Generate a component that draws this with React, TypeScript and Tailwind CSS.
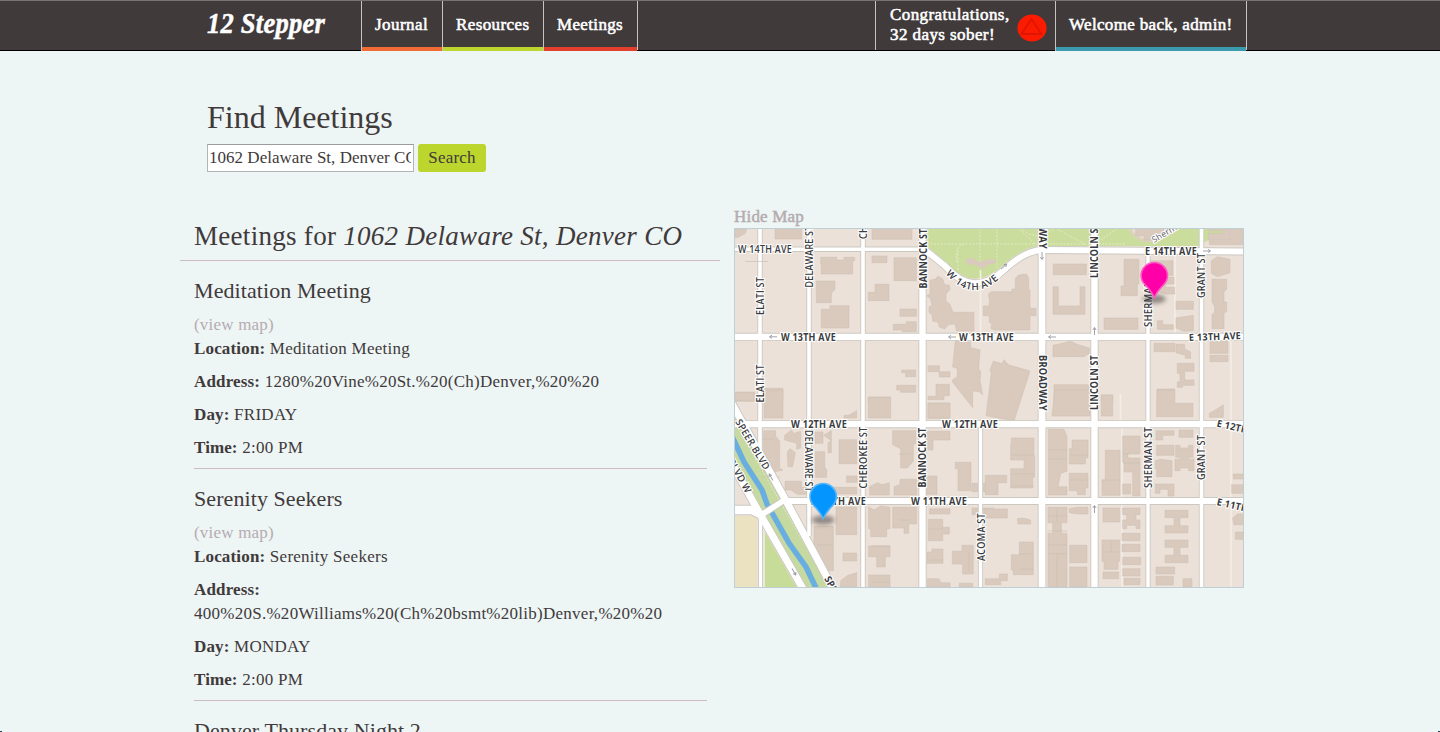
import React from "react";

type Meeting = { name: string; address: string; day: string; time: string };

const meetings: Meeting[] = [
  { name: "Meditation Meeting", address: "1280%20Vine%20St.%20(Ch)Denver,%20%20", day: "FRIDAY", time: "2:00 PM" },
  { name: "Serenity Seekers", address: "400%20S.%20Williams%20(Ch%20bsmt%20lib)Denver,%20%20", day: "MONDAY", time: "2:00 PM" },
];
const nextMeeting = "Denver Thursday Night 2";

// path of each road and the width of its surface
const roads: [string, number][] = [
  ["M760 228V450", 3],
  ["M760.5 516V587", 2.6],
  ["M809 228V536", 3],
  ["M863 228V587", 3],
  ["M980.5 424V587", 2.8],
  ["M1148 246V587", 2.8],
  ["M1201.5 228V587", 3],
  ["M734 249.3H923", 3],
  ["M922.5 228V587", 5.8],
  ["M1042 228V587", 6.2],
  ["M1094.5 228V587", 5.8],
  ["M734 336.8H1244", 5.6],
  ["M734 424.2H1244", 5.6],
  ["M784 501H1244", 5.6],
  ["M924 249L945 266Q974 299 1005 269Q1026 250 1043 250L1110 250.5L1244 251.5", 5.4],
  ["M732 510H752L764 516", 8],
  ["M731 402L784 497L836 594", 6.4],
  ["M731 462L760 514L806 594", 6.4],
  ["M763 514L786 499", 5],
];

type Label = { t: string; x: number; y: number; w: number; r?: number; s?: number };
const labels: Label[] = [
  { t: "W 14TH AVE", x: 738, y: 249.5, w: 54 },
  { t: "DELAWARE ST", x: 809.5, y: 287.5, w: 62, r: -90 },
  { t: "CHEROKEE ST", x: 863.5, y: 239, w: 61, r: -90 },
  { t: "BANNOCK ST", x: 923, y: 288.5, w: 60, r: -90, s: 1 },
  { t: "ELATI ST", x: 760, y: 315, w: 38, r: -90 },
  { t: "ELATI ST", x: 760, y: 402.5, w: 38, r: -90 },
  { t: "W 13TH AVE", x: 781, y: 337, w: 55, s: 1 },
  { t: "W 13TH AVE", x: 959, y: 337.5, w: 55, s: 1 },
  { t: "E 13TH AVE", x: 1189, y: 337.5, w: 52, r: -2, s: 1 },
  { t: "E 14TH AVE", x: 1145, y: 251.3, w: 52, s: 1 },
  { t: "BROADWAY", x: 1042, y: 193, w: 56, r: 90, s: 1 },
  { t: "BROADWAY", x: 1042, y: 355, w: 56, r: 90, s: 1 },
  { t: "LINCOLN ST", x: 1094.5, y: 278, w: 55, r: -90, s: 1 },
  { t: "LINCOLN ST", x: 1094.5, y: 410, w: 55, r: -90, s: 1 },
  { t: "SHERMAN ST", x: 1148.5, y: 327, w: 61, r: -90 },
  { t: "SHERMAN ST", x: 1148.5, y: 488, w: 61, r: -90 },
  { t: "GRANT ST", x: 1201.5, y: 298, w: 45, r: -90 },
  { t: "GRANT ST", x: 1201.5, y: 480, w: 45, r: -90 },
  { t: "W 12TH AVE", x: 791, y: 424.3, w: 56, s: 1 },
  { t: "W 12TH AVE", x: 942, y: 424.3, w: 56, s: 1 },
  { t: "W 11TH AVE", x: 810, y: 501, w: 56, s: 1 },
  { t: "W 11TH AVE", x: 911, y: 501, w: 56, s: 1 },
  { t: "CHEROKEE ST", x: 863.5, y: 488.5, w: 62, r: -90 },
  { t: "BANNOCK ST", x: 922.5, y: 487.5, w: 60, r: -90, s: 1 },
  { t: "DELAWARE ST", x: 808.5, y: 430, w: 62, r: 90 },
  { t: "ACOMA ST", x: 981, y: 561, w: 48, r: -90 },
  { t: "E 12TH AVE", x: 1217, y: 423, w: 53, r: 13, s: 1 },
  { t: "E 11TH AVE", x: 1217, y: 501.5, w: 53, r: 13, s: 1 },
  { t: "SPEER BLVD", x: 738, y: 420, w: 57, r: 59 },
  { t: "SPEER BLVD W", x: 715, y: 431, w: 70, r: 61 },
  { t: "SPEER BLVD", x: 827, y: 577, w: 56, r: 60, s: 1 },
];

const northWest =
  "M3 88H38L34 100L14 112H3ZM123 85H203V117H123ZM260 172H308V180H330V172H362V182H356V222H262V190H260ZM414 85H534V118H414ZM414 168H459V188H414ZM480 173H547V242H480ZM247 243H303V268L292 280V308H247ZM423 253H465V302H403V277H423ZM262 328H288V317H345V384H262ZM498 327H547V349H498ZM478 373H517V365H547V395H505V390H478ZM503 510H545V530H515V518H503ZM488 556H545V577H500V570H488ZM403 591H469V604H403ZM5 576H62V604H5ZM93 565H147V604H93Z";
const civic =
  "M60 166L76 162L84 153L98 162L104 180H117L120 194L108 207V228L120 238L128 260L134 262H192V318H140L134 296L115 300L104 312L88 306L84 292L68 288L66 270L57 262V246L66 240L62 222L50 212L60 206ZM316 160Q324 146 350 148L356 160V192L360 196V250H378V272H360V315H250V312L242 310L246 298L238 292V272H220V243H238V222Q230 204 246 200H306V192H316ZM136 346L182 352V368L210 374L206 432L212 440L210 465L218 510L208 500L188 498V548L128 472V464L142 455V430L128 426ZM250 408L276 416L282 404L296 420L360 438L312 588L228 572L244 444L240 436ZM54 422H88V440H120V456H88V440H54ZM78 478H118V512H102V524H54V514H78ZM54 534H119V580H54Z";
const northEast =
  "M208 192H307V224H208ZM207 260H223V318H288V260H303V343H207ZM207 436L242 428Q262 420 276 432L316 444V460L300 470H207ZM210 554H316V604H210ZM420 178H465V252H460V287H411V258H420ZM360 354H462V388H360ZM498 182H567V226H524V232H570V252H545V262H572V282H545L510 270ZM576 304H628V328H576ZM520 362H536V374H568V388H520ZM576 354L628 346V392L600 394L576 384ZM682 182L700 170L738 178V218L700 230L682 220ZM684 238H728V268L720 275V306H728V334L720 340V386H684V344L692 336V320L684 306ZM510 430H573V455H510ZM576 433H602V447L620 456V475H604V466L576 458ZM580 490H630V514H602V540H630V556H596V562H580V546H588V520H580ZM678 424H732V460H678ZM678 466H732V485H678ZM519 567H572V604H519ZM673 85H738V120H673V100H718V92H673ZM676 122H738V134H676ZM740 85H778V134H740ZM352 585H386V604H352ZM455 85H539V110H515V120H480V108H455Z";
const southWest =
  "M4 8H60V32H4ZM90 0H147V84H90ZM89 122H125V138L137 154V235L147 240L120 246H89ZM152 136L172 120L180 130L200 124V174L188 178V160L152 150ZM160 186L168 176L184 188L176 230H162ZM243 126H267V160H243ZM269 136L292 122V152ZM315 149H368V221H315ZM282 158L292 152V188H282ZM244 185H272V234L278 238V262H244ZM330 76H344L368 62V84H330ZM403 22H470V84H403ZM153 274H202V292H225V313H190L170 300H153ZM276 292H368V312H276ZM338 258H370V277H338ZM407 290L430 278L445 284L466 278V315H407ZM476 122H545V162H538V214L520 234H500V176L476 164ZM480 290L498 284V268H548V315H480ZM582 40H648V84H582ZM580 124H648V150H597V180H580ZM664 217H711V302H672V236H664ZM582 258H609V313H555V276ZM714 280H779V305H714ZM306 351H368V434H306ZM404 350L420 360L440 348L468 352V416H458V440H410V416H404ZM476 352H548V402H524V430H510V414H476ZM586 356H648V372H586ZM583 388H626V412H646V432H626V452H583ZM594 477H627V520H579V486H594ZM327 489H368V513H327ZM404 468H468V500H454V531H428V500H404ZM655 484H684V466H718V552H686V522H655ZM404 555H468V591H404ZM240 408H298V542H275V554L296 570V591L240 500ZM320 572L342 556L368 548V591H320ZM580 566H614L622 578H648V591H580ZM676 580H716V591H676ZM714 354H779V374H714Z";
const southEast =
  "M212 0H318V78H204ZM352 15H386V78H352ZM520 0H572V40H627V80H518V40ZM676 70L704 54L718 44V82H676ZM82 144H150V198H152V262H146V294H80V236H120V210H80V162H82ZM4 256H68V278H42V314H4ZM193 118H240L249 140V244L230 250L222 290H249V315H193ZM264 150H312V204H304V222H256V176H264ZM256 250H312V294H304V314H280V302H256ZM364 181H408V316H354V270H364ZM416 138H468V190H432V204H468V318H446V246H420V216H416ZM416 282H440V312H416ZM516 122H570V136H536V150H516ZM585 120H627V142H585ZM518 166H570V196H518ZM575 166H588V174H614V166H627V202H614V208H630V242H614V234H588V242H573V208H588V202H575ZM514 212L530 208L564 212V260H518V236H514ZM514 282H570V318H552V298H528V310H514ZM748 252H778V267H748ZM743 284H778V310H743ZM4 357H70V384H4ZM100 386L118 384L140 390V402H102ZM106 456H148V554H88V540H82V494H106ZM4 566H46V552H70V572H50V584H4ZM192 352H249V398H232V430H249V491H192V430H206V398H192ZM256 356L278 352H312V372H280L256 368ZM192 491H249V591H192ZM257 466H309V518H257ZM257 531H309V591H257ZM357 354H407V396H357ZM354 450H407V514H402V538H360V514H354ZM357 546H404V566H357ZM416 354H468V374H456V390H468V416H456V406H428V416H416V390H428V374H416ZM414 430H468V452H414ZM414 463H468V485H414ZM416 502H470V524H416ZM416 536H468V558H416ZM420 565H468V584H420ZM543 361H612V383H588V407H612V429H543V407H570V383H543ZM543 450H612V472H588V496H612V518H543V496H570V472H543ZM516 531H572V552H516ZM516 559H568V585H516ZM597 566H624V591H597ZM746 384L760 372H778V404H750ZM754 426H778V448H754Z";

const buildingGroups: [string, string][] = [
  ["translate(734 200) scale(.33333)", northWest],
  ["translate(910 225) scale(.33333)", civic],
  ["translate(984 200) scale(.33333)", northEast],
  ["translate(734 390) scale(.33333)", southWest],
  ["translate(984 390) scale(.33333)", southEast],
];

function Arrow({ x, y, r }: { x: number; y: number; r: number }) {
  return (
    <path d="M-4 0H3M1 -1.6L3.600 0L1 1.600" transform={`translate(${x} ${y}) rotate(${r})`} fill="none" stroke="#9899a1" strokeWidth="0.9" />
  );
}

function Pin({ x, y, fill, edge }: { x: number; y: number; fill: string; edge: string }) {
  return (
    <g transform={`translate(${x} ${y})`}>
      <ellipse cx="0" cy="0" rx="11.500" ry="4.500" fill="#3b3330" opacity="0.5" filter="url(#soft)" />
      <path
        d="M0 -1.2C-2 -6 -5 -10 -9.5 -14.5C-12 -17.200 -13.200 -20 -13.200 -23.500A13.200 13 0 0 1 13.200 -23.500C13.200 -20 12 -17.200 9.500 -14.500C5 -10 2 -6 0 -1.200Z"
        fill={fill}
        stroke={edge}
        strokeWidth="1.6"
      />
    </g>
  );
}

function StreetMap() {
  return (
    <svg viewBox="734 228 510 360" className="block h-[360px] w-[510px]" fontFamily="'Open Sans', 'Noto Sans', sans-serif">
      <defs>
        <filter id="soft" x="-50%" y="-100%" width="200%" height="300%">
          <feGaussianBlur stdDeviation="2.2" />
        </filter>
        <path id="bend" d="M945.500 273.500Q972 305 1001 277" />
      </defs>
      <rect x="734" y="228" width="510" height="360" fill="#ebe1d8" />
      <path d="M734 516H757V588H734Z" fill="#eae2c0" />
      <path d="M762 527L797 588H764Z" fill="#c7dc99" />
      <path d="M734 412L784 503L832 588H802L760 510L734 468Z" fill="#c5d9a0" />
      <path d="M927 228H1231L1198 246H1040Q1026 246 1004 264Q975 293 949 265L927 246Z" fill="#cadd9c" />
      <path d="M1129 228Q1135 239 1147 241Q1165 239 1178 228Z" fill="#ebe1d8" stroke="#ddd2bd" strokeWidth="3" />
      <path
        d="M927 244H1125M997 228V268M980 228V262M958 270V248M1018 228L1035 244M1020 228Q1036 243 1055 228M1095 244L1118 228M1055 228L1085 244M957 262Q954 245 964 244M738 428L829 587M779 540L802 587"
        fill="none"
        stroke="#e4ecc9"
        strokeWidth="0.9"
        strokeDasharray="2 1.5"
      />
      <path d="M965 259L972 258L980 262L989 259L997 260L996 263L987 265L984 269L979 267L975 265L967 264Z" fill="#d9cabd" />
      <path d="M731 434L744 462L762 490L767 504L789 543L806 567L817 590" fill="none" stroke="#69aee0" strokeWidth="5.500" />
      <path d="M1175 255V336M1231 338V424M1231 428V588M1120.500 394V424M1122 428V588M764 512V588M980.500 270V334" fill="none" stroke="#f4eee8" strokeWidth="1.600" />
      <g fill="#d9cabd" stroke="#cdbfb2" strokeWidth="1.600">
        {buildingGroups.map(([transform, d]) => (
          <path key={transform} transform={transform} d={d} />
        ))}
      </g>
      <path
        d="M761 477H780M761 439H774M899 454H911M817 545H833M899 520H910M929 529H943M929 560H942M1011 455H1034M1011 474H1034M1011 486H1034M1048 450H1067M1048 459H1067M1048 516H1067M1048 531H1067M1048 545H1067M1057 508V523M1057 554V587M1070 455H1088M1070 480H1088M1102 480H1120M1123 454H1140M1123 463H1140M1111 540V552M1102 552H1119M1019 554H1033M1019 569H1033M969 552V572M872 546H890M872 582H890"
        fill="none"
        stroke="#cbbcae"
        strokeWidth="0.6"
      />
      <g fill="none" stroke="#cbc8c1">
        {roads.map(([d, w]) => (
          <path key={d} d={d} strokeWidth={w + 2.4} />
        ))}
      </g>
      <g fill="none" stroke="#ffffff">
        {roads.map(([d, w]) => (
          <path key={d} d={d} strokeWidth={w + 0.6} />
        ))}
      </g>
      <path d="M745 261.500H768" stroke="#c9c1ba" strokeWidth="0.7" />
      <Arrow x={773} y={336.8} r={180} />
      <Arrow x={952} y={337} r={180} />
      <Arrow x={1052} y={337} r={180} />
      <Arrow x={1042} y={256} r={90} />
      <Arrow x={1094.5} y={331} r={-90} />
      <Arrow x={1094.5} y={509} r={-90} />
      <Arrow x={1207} y={251} r={0} />
      <Arrow x={1004} y={266.5} r={-42} />
      <Arrow x={771} y={477} r={240} />
      <Arrow x={794} y={572} r={60} />
      <g fontSize="9.900" fill="#3a3b40" stroke="#ffffff" strokeWidth="2.200" strokeLinejoin="round" paintOrder="stroke">
        {labels.map((l, i) => (
          <text
            key={i}
            transform={`translate(${l.x} ${l.y}) rotate(${l.r ?? 0})`}
            y="3.500"
            textLength={l.w}
            lengthAdjust="spacingAndGlyphs"
            fontWeight={l.s ? 700 : 600}
          >
            {l.t}
          </text>
        ))}
        <text fontWeight="600" textLength="62">
          <textPath href="#bend">W 14TH AVE</textPath>
        </text>
        <text transform="translate(1154 243) rotate(-31)" fontSize="8.500" fontWeight="400" fill="#55565c">
          Sherman
        </text>
      </g>
      <Pin x={1154.3} y={299} fill="#ff00a8" edge="#ff58c6" />
      <Pin x={823.2} y={520} fill="#0495ff" edge="#58b5f5" />
      <rect x="734.500" y="228.500" width="509" height="359" fill="none" stroke="#bfcfd3" />
    </svg>
  );
}

function NavLink({ label, className }: { label: string; className: string }) {
  return (
    <a className={`h-[50px] border-b-4 pl-[13px] pt-3 leading-6 shadow-[-1px_0_0_#c9c2c3] ${className}`}>{label}</a>
  );
}

function Header() {
  return (
    <header className="h-[51px] border-b border-t border-b-black border-t-[#777475] bg-[#403a3b] text-[17px] text-white [-webkit-text-stroke:0.55px_white]">
      <div className="mx-auto flex h-[50px] w-[1080px]">
        <div className="w-[182px] pl-[26px]">
          <svg viewBox="0 0 124 48" className="h-12 w-[124px]">
            <text
              x="1"
              y="32"
              textLength="118"
              lengthAdjust="spacingAndGlyphs"
              fill="white"
              stroke="white"
              strokeWidth="0.5"
              fontFamily="'Liberation Serif', serif"
              fontStyle="italic"
              fontWeight="700"
              fontSize="30"
            >
              12 Stepper
            </text>
          </svg>
        </div>
        <nav className="flex">
          <NavLink label="Journal" className="w-[81px] border-[#f16c35] tracking-[0.45px]" />
          <NavLink label="Resources" className="w-[101px] border-[#bdd62e] tracking-[0.4px]" />
          <NavLink label="Meetings" className="w-[93px] border-[#e2402c] tracking-[0.35px]" />
          <div className="h-[49px] w-px bg-[#c9c2c3]" />
        </nav>
        <div className="ml-auto mr-[13px] flex">
          <div className="flex h-[49px] w-[180px] pl-[14px] pt-1 shadow-[-1px_0_0_#c9c2c3]">
            <p className="w-[127px] whitespace-nowrap leading-5 tracking-[0.42px]">
              Congratulations,
              <br />
              32 days sober!
            </p>
            <svg viewBox="0 0 30 28" className="mt-[9px] h-7 w-[30px]">
              <ellipse cx="15" cy="14" rx="14.600" ry="13.600" fill="#fb1b00" />
              <path d="M14.500 5L24.500 20H4.500Z" fill="none" stroke="#e01500" strokeWidth="1.800" />
            </svg>
          </div>
          <NavLink label="Welcome back, admin!" className="w-[190px] whitespace-nowrap border-[#3b9aad] tracking-[0.34px]" />
          <div className="h-[49px] w-px bg-[#c9c2c3]" />
        </div>
      </div>
    </header>
  );
}

function Field({ label, value }: { label: string; value: string }) {
  return (
    <p className="mb-[9px] leading-6">
      <b className="tracking-[0.16px]">{label}:</b> {value}
    </p>
  );
}

export default function App() {
  return (
    <div className="relative h-[732px] overflow-hidden bg-[#eef5f5] font-['Liberation_Serif',serif] text-[17px] tracking-[0.26px] text-[#403a3b]">
      <Header />
      <main className="mx-auto w-[1080px]">
        <section className="h-[154px] pl-[27px] pt-[46px]">
          <h1 className="text-[32px] leading-[40px] tracking-normal">Find Meetings</h1>
          <form className="mt-[7px] flex gap-1">
            <input
              defaultValue="1062 Delaware St, Denver CO"
              className="h-7 w-[207px] border border-[#b4b4b4] border-t-[#9c9c9c] bg-white pl-px pr-[2px] tracking-[0.02px] outline-none"
            />
            <button type="button" className="h-7 w-[68px] rounded-[3px] bg-[#bdd62e] tracking-[0.2px]">
              Search
            </button>
          </form>
        </section>
        <div className="flex">
          <section className="w-[540px]">
            <h2 className="h-14 whitespace-nowrap border-b border-[#cdbcc2] pl-[14px] pt-[16px] text-[27px] leading-[30px] tracking-[0.29px]">
              Meetings for <i>1062 Delaware St, Denver CO</i>
            </h2>
            <div className="pl-[14px] pr-[13px]">
              {meetings.map((m) => (
                <article key={m.name} className="border-b border-[#cdbcc2] pt-[14px]">
                  <h3 className="h-[38px] text-[22px] leading-8 tracking-[0.08px]">{m.name}</h3>
                  <a className="block leading-6 tracking-[0.2px] text-[#b5acaf]">(view map)</a>
                  <Field label="Location" value={m.name} />
                  <Field label="Address" value={m.address} />
                  <Field label="Day" value={m.day} />
                  <p className="mb-2 leading-6">
                    <b className="tracking-[0.1px]">Time:</b> {m.time}
                  </p>
                </article>
              ))}
              <article className="pt-[14px]">
                <h3 className="h-[38px] text-[22px] leading-8 tracking-[0.08px]">{nextMeeting}</h3>
              </article>
            </div>
          </section>
          <section className="pl-[14px]">
            <a className="block h-[23px] leading-6 tracking-[0.2px] text-[#b5acaf] [-webkit-text-stroke:0.5px_#b5acaf]">Hide Map</a>
            <StreetMap />
          </section>
        </div>
      </main>
      <div className="absolute bottom-0 left-0 h-px w-[2px] bg-[#2b3b50]" />
      <div className="absolute bottom-0 right-0 h-px w-[2px] bg-[#2b3b50]" />
    </div>
  );
}
